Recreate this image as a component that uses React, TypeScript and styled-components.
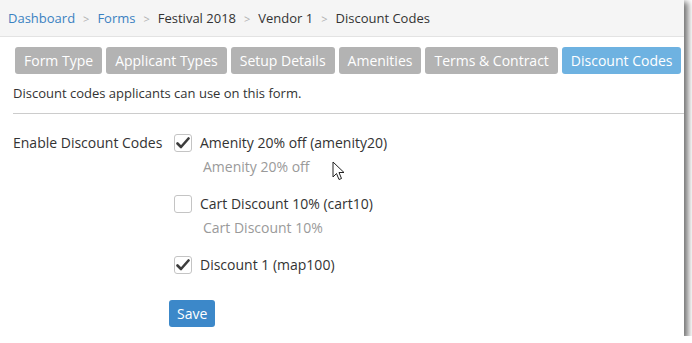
import styled, { createGlobalStyle } from 'styled-components'

const Global = createGlobalStyle`
  html, body { margin: 0; padding: 0; background: #fff; }
  body { font-family: "Open Sans", "Liberation Sans", sans-serif; font-size: 14px; color: #333; }
`

const Frame = styled.div`
  position: relative;
  width: 684px;
  height: 336px;
  background: #fff;
  box-shadow: 3px 3px 6px 1px rgba(0, 0, 0, 0.55);
  overflow: hidden;
`

const Crumbs = styled.ul`
  display: flex;
  align-items: center;
  margin: 0;
  padding: 0 8px;
  height: 36px;
  list-style: none;
  background: #f5f5f5;
  border-bottom: 1px solid #e3e3e3;
  font-size: 13px;
  li + li::before {
    content: '>';
    color: #b0b0b0;
    padding: 0 8px;
    font-size: 11px;
  }
`

const Crumb = styled.li<{ $link?: boolean }>`
  color: ${p => (p.$link ? '#3a81c1' : '#333')};
`

const Body = styled.div`
  padding: 10px 0 0 13px;
`

const Tabs = styled.div`
  display: flex;
  gap: 4px;
  margin-left: 2px;
`

const Tab = styled.button<{ $active?: boolean }>`
  font-family: inherit;
  font-size: 14px;
  color: #fff;
  border: 0;
  border-radius: 3px;
  height: 27px;
  padding: 0 9px;
  background: ${p => (p.$active ? '#6eb2e1' : '#b3b3b3')};
  cursor: pointer;
`

const Intro = styled.p`
  margin: 10px 0 0;
  font-size: 13px;
  line-height: 18px;
`

const Rule = styled.hr`
  margin: 11px 0 0;
  border: 0;
  border-top: 1px solid #ccc;
`

const Field = styled.div`
  display: flex;
  margin-top: 19px;
`

const FieldLabel = styled.div`
  width: 161px;
  line-height: 20px;
`

const Options = styled.div`
  display: flex;
  flex-direction: column;
`

const Option = styled.label`
  display: flex;
  flex-direction: column;
  margin-bottom: 17px;
`

const OptionRow = styled.span`
  display: flex;
  align-items: center;
  gap: 8px;
  line-height: 20px;
`

const Box = styled.span`
  width: 16px;
  height: 16px;
  border: 1px solid #c4c4c4;
  border-radius: 3px;
  background: #fff;
  display: flex;
  align-items: center;
  justify-content: center;
`

const Hint = styled.span`
  color: #9a9a9a;
  line-height: 20px;
  margin: 4px 0 0 29px;
`

const SaveButton = styled.button`
  align-self: flex-start;
  margin-top: 8px;
  margin-left: -5px;
  font-family: inherit;
  font-size: 14px;
  color: #fff;
  background: #3c88c9;
  border: 0;
  border-radius: 3px;
  height: 27px;
  padding: 0 8px;
`

const Pointer = styled.svg`
  position: absolute;
  left: 332px;
  top: 161px;
`

const Check = () => (
  <svg width="14" height="12" viewBox="0 0 14 12">
    <path d="M1.5 6.5 L5 10 L12.5 1.5" fill="none" stroke="#3d3d3d" strokeWidth="2.6" strokeLinecap="round" strokeLinejoin="round" />
  </svg>
)

const codes = [
  { name: 'Amenity 20% off (amenity20)', hint: 'Amenity 20% off', checked: true },
  { name: 'Cart Discount 10% (cart10)', hint: 'Cart Discount 10%', checked: false },
  { name: 'Discount 1 (map100)', hint: '', checked: true }
]

const tabs = ['Form Type', 'Applicant Types', 'Setup Details', 'Amenities', 'Terms & Contract', 'Discount Codes']

export default function App() {
  return (
    <>
      <Global />
      <Frame>
        <Crumbs>
          <Crumb $link>Dashboard</Crumb>
          <Crumb $link>Forms</Crumb>
          <Crumb>Festival 2018</Crumb>
          <Crumb>Vendor 1</Crumb>
          <Crumb>Discount Codes</Crumb>
        </Crumbs>
        <Body>
          <Tabs>
            {tabs.map(t => (
              <Tab key={t} $active={t === 'Discount Codes'}>{t}</Tab>
            ))}
          </Tabs>
          <Intro>Discount codes applicants can use on this form.</Intro>
          <Rule />
          <Field>
            <FieldLabel>Enable Discount Codes</FieldLabel>
            <Options>
              {codes.map(c => (
                <Option key={c.name}>
                  <OptionRow>
                    <Box>{c.checked && <Check />}</Box>
                    {c.name}
                  </OptionRow>
                  {c.hint && <Hint>{c.hint}</Hint>}
                </Option>
              ))}
              <SaveButton>Save</SaveButton>
            </Options>
          </Field>
        </Body>
        <Pointer width="14" height="20" viewBox="0 0 14 20">
          <path d="M1 1 L1 16 L4.5 12.5 L7 18.5 L9.5 17.5 L7 11.5 L12 11.5 Z" fill="#fff" stroke="#222" strokeWidth="1" strokeLinejoin="round" />
        </Pointer>
      </Frame>
    </>
  )
}
